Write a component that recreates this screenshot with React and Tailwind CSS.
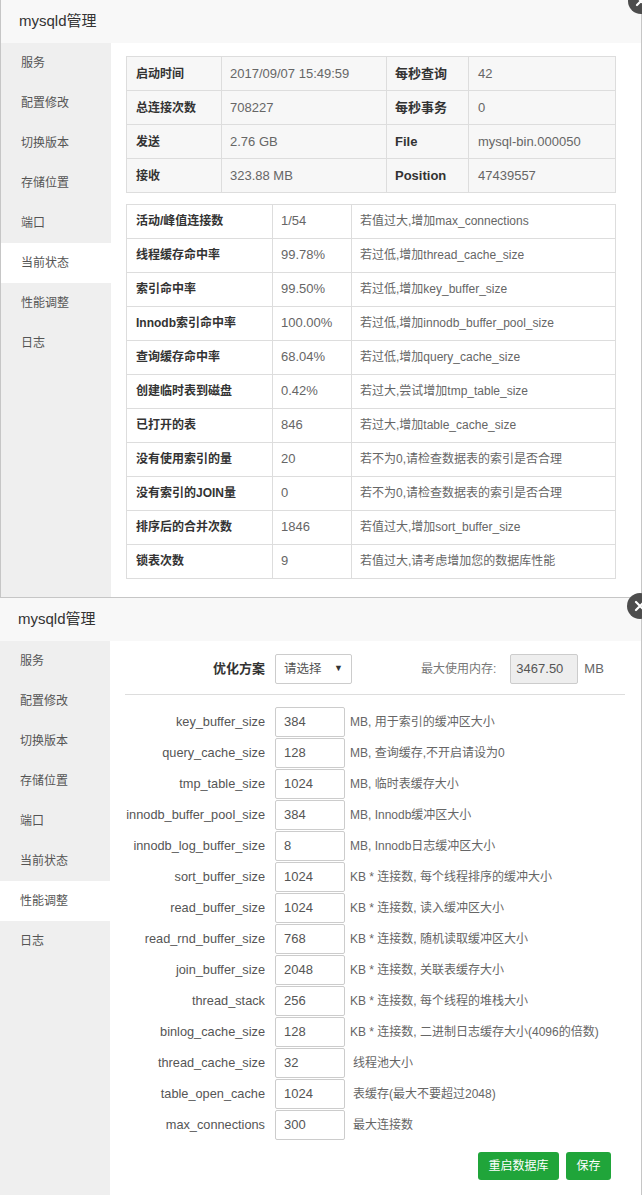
import React from 'react';

const sideItems = ['服务', '配置修改', '切换版本', '存储位置', '端口', '当前状态', '性能调整', '日志'];

const t1 = [
  ['启动时间', '2017/09/07 15:49:59', '每秒查询', '42'],
  ['总连接次数', '708227', '每秒事务', '0'],
  ['发送', '2.76 GB', 'File', 'mysql-bin.000050'],
  ['接收', '323.88 MB', 'Position', '47439557'],
];

const t2 = [
  ['活动/峰值连接数', '1/54', '若值过大,增加max_connections'],
  ['线程缓存命中率', '99.78%', '若过低,增加thread_cache_size'],
  ['索引命中率', '99.50%', '若过低,增加key_buffer_size'],
  ['Innodb索引命中率', '100.00%', '若过低,增加innodb_buffer_pool_size'],
  ['查询缓存命中率', '68.04%', '若过低,增加query_cache_size'],
  ['创建临时表到磁盘', '0.42%', '若过大,尝试增加tmp_table_size'],
  ['已打开的表', '846', '若过大,增加table_cache_size'],
  ['没有使用索引的量', '20', '若不为0,请检查数据表的索引是否合理'],
  ['没有索引的JOIN量', '0', '若不为0,请检查数据表的索引是否合理'],
  ['排序后的合并次数', '1846', '若值过大,增加sort_buffer_size'],
  ['锁表次数', '9', '若值过大,请考虑增加您的数据库性能'],
];

const form = [
  ['key_buffer_size', '384', 'MB, 用于索引的缓冲区大小'],
  ['query_cache_size', '128', 'MB, 查询缓存,不开启请设为0'],
  ['tmp_table_size', '1024', 'MB, 临时表缓存大小'],
  ['innodb_buffer_pool_size', '384', 'MB, Innodb缓冲区大小'],
  ['innodb_log_buffer_size', '8', 'MB, Innodb日志缓冲区大小'],
  ['sort_buffer_size', '1024', 'KB * 连接数, 每个线程排序的缓冲大小'],
  ['read_buffer_size', '1024', 'KB * 连接数, 读入缓冲区大小'],
  ['read_rnd_buffer_size', '768', 'KB * 连接数, 随机读取缓冲区大小'],
  ['join_buffer_size', '2048', 'KB * 连接数, 关联表缓存大小'],
  ['thread_stack', '256', 'KB * 连接数, 每个线程的堆栈大小'],
  ['binlog_cache_size', '128', 'KB * 连接数, 二进制日志缓存大小(4096的倍数)'],
  ['thread_cache_size', '32', '线程池大小'],
  ['table_open_cache', '1024', '表缓存(最大不要超过2048)'],
  ['max_connections', '300', '最大连接数'],
];

function Sidebar({ active }) {
  return (
    <div className="w-[110px] shrink-0 bg-[#efefef]">
      {sideItems.map((s) => (
        <div
          key={s}
          className={
            'h-[40px] pl-[20px] flex items-center text-[12px] text-[#555] ' +
            (s === active ? 'bg-white' : '')
          }
        >
          {s}
        </div>
      ))}
    </div>
  );
}

function Header() {
  return (
    <div className="h-[43px] bg-[#f8f8f8] pl-[18px] pb-[1px] flex items-center text-[15px] text-[#333]">
      mysqld管理
    </div>
  );
}

function CloseBtn({ cls }) {
  return (
    <div className={'absolute w-[26px] h-[26px] rounded-full bg-[#4d4d4d] flex items-center justify-center z-10 ' + cls}>
      <svg width="12" height="12" viewBox="0 0 12 12">
        <path d="M2 2 L10 10 M10 2 L2 10" stroke="#fff" strokeWidth="2.2" strokeLinecap="round" />
      </svg>
    </div>
  );
}

export default function App() {
  return (
    <div className="relative w-[642px] h-[1195px] overflow-hidden bg-white font-['Liberation_Sans','Noto_Sans_CJK_SC',sans-serif]">
      {/* Panel 1 */}
      <div className="h-[598px] w-[642px] border-l border-r border-b border-[#c6c6c6] flex flex-col">
        <Header />
        <div className="flex flex-1">
          <Sidebar active="当前状态" />
          <div className="flex-1 pl-[15px] pt-[13px]">
            <table className="w-[490px] border-collapse bg-[#f7f7f7]">
              <tbody>
                {t1.map((r, i) => (
                  <tr key={i} className="h-[34px]">
                    <td className="w-[95px] border border-[#ddd] pl-[9px] text-[12px] font-bold text-[#333]">{r[0]}</td>
                    <td className="w-[165px] border border-[#ddd] pl-[8px] text-[13px] text-[#666]">{r[1]}</td>
                    <td className="w-[82px] border border-[#ddd] pl-[8px] text-[13px] font-bold text-[#333]">{r[2]}</td>
                    <td className="border border-[#ddd] pl-[9px] text-[13px] text-[#666]">{r[3]}</td>
                  </tr>
                ))}
              </tbody>
            </table>
            <table className="w-[490px] border-collapse bg-white mt-[11px]">
              <tbody>
                {t2.map((r, i) => (
                  <tr key={i} className="h-[34px]">
                    <td className="w-[146px] border border-[#ddd] pl-[9px] pb-[1px] text-[12px] font-bold text-[#333]">{r[0]}</td>
                    <td className="w-[79px] border border-[#ddd] pl-[8px] pb-[1px] text-[13px] text-[#666]">{r[1]}</td>
                    <td className="border border-[#ddd] pl-[8px] pb-[1px] text-[12px] text-[#666]">{r[2]}</td>
                  </tr>
                ))}
              </tbody>
            </table>
          </div>
        </div>
      </div>

      {/* Panel 2 */}
      <div className="h-[597px] w-[642px] border-r border-[#c6c6c6] flex flex-col">
        <Header />
        <div className="flex flex-1">
          <Sidebar active="性能调整" />
          <div className="flex-1 pl-[15px] pt-[13px]">
            <div className="flex items-center h-[30px]">
              <div className="w-[140px] text-right text-[13px] font-bold text-[#333]">优化方案</div>
              <div className="ml-[10px] w-[77px] h-[30px] border border-[#ccc] rounded-[2px] flex items-center pl-[8px] pr-[8px] justify-between text-[12.5px] text-[#555]">
                <span>请选择</span>
                <span className="text-[9px] text-[#333]">▼</span>
              </div>
              <div className="ml-[69px] text-[12px] text-[#777]">最大使用内存:</div>
              <div className="ml-[14px] w-[68px] h-[30px] border border-[#ccc] rounded-[2px] bg-[#eee] flex items-center pl-[5px] text-[13px] text-[#555]">3467.50</div>
              <div className="ml-[6px] text-[13px] text-[#666]">MB</div>
            </div>
            <div className="mt-[10px] w-[500px] h-[1px] bg-[#ddd]" />
            <div className="mt-[12px]">
              {form.map((r) => (
                <div key={r[0]} className="flex items-start h-[31px]">
                  <div className="w-[140px] h-[30px] flex items-center justify-end text-[12.75px] text-[#555]">{r[0]}</div>
                  <div className="ml-[10px] w-[70px] h-[30px] border border-[#ccc] rounded-[2px] flex items-center pl-[8px] text-[13px] text-[#555]">{r[1]}</div>
                  <div className={'h-[30px] flex items-center text-[12px] text-[#666] ' + (r[2].startsWith('MB') || r[2].startsWith('KB') ? 'ml-[5px]' : 'ml-[8px]')}>{r[2]}</div>
                </div>
              ))}
            </div>
            <div className="mt-[11px] w-[486px] flex justify-end gap-[7px]">
              <div className="w-[81px] h-[28px] rounded-[3px] bg-[#20a53a] text-white text-[12px] flex items-center justify-center">重启数据库</div>
              <div className="w-[45px] h-[28px] rounded-[3px] bg-[#20a53a] text-white text-[12px] flex items-center justify-center">保存</div>
            </div>
          </div>
        </div>
      </div>

      <CloseBtn cls="left-[628px] top-[-12px]" />
      <CloseBtn cls="left-[627px] top-[593px]" />
    </div>
  );
}
